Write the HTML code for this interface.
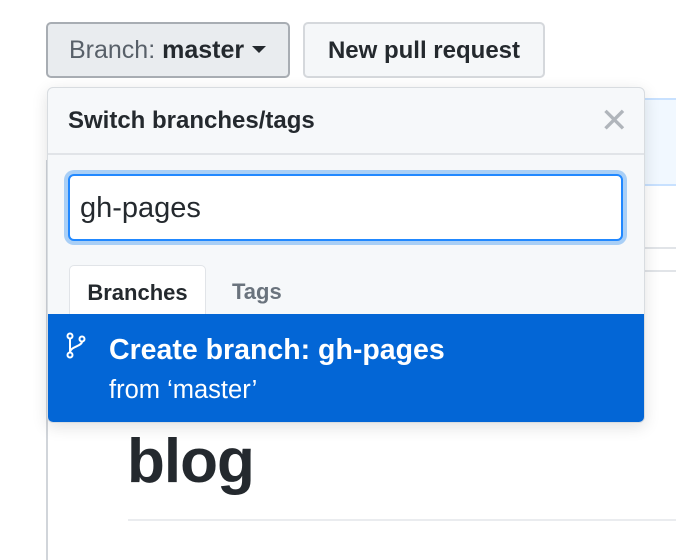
<!DOCTYPE html>
<html><head><style>
body{margin:0;width:676px;height:558px;background:#fff;position:relative;overflow:hidden;font-family:"Liberation Sans",sans-serif;color:#24292e}
.a{position:absolute}
</style></head><body>
<div class="a" style="left:645px;top:98px;width:40px;height:84px;background:#f1f8ff;border-top:2px solid #c8e1ff;border-bottom:2px solid #c8e1ff"></div>
<div class="a" style="left:645px;top:247px;width:40px;height:2px;background:#e1e4e8"></div>
<div class="a" style="left:645px;top:270px;width:40px;height:2px;background:#e1e4e8"></div>
<div class="a" style="left:46px;top:160px;width:2px;height:400px;background:#d1d5da"></div>
<div class="a" style="left:127px;top:426px;font-size:62px;font-weight:bold;letter-spacing:-1px">blog</div>
<div class="a" style="left:128px;top:519px;width:560px;height:2px;background:#eaecef"></div>

<div class="a" style="left:46px;top:22px;width:240px;height:52px;background:#e9ecef;border:2px solid #a8adb3;border-radius:5px;font-size:25px;line-height:52px;text-indent:21px;color:#586069;white-space:nowrap">Branch: <b style="color:#24292e">master</b><span style="display:inline-block;width:0;height:0;border-left:7px solid transparent;border-right:7px solid transparent;border-top:7px solid #24292e;margin-left:8px;vertical-align:5px"></span></div>
<div class="a" style="left:303px;top:22px;width:238px;height:52px;background:#f5f7f9;border:2px solid #d5d8dc;border-radius:5px;font-size:24px;font-weight:bold;line-height:54px;text-align:center">New pull request</div>

<div class="a" style="left:47px;top:87px;width:596px;height:334px;border:1px solid #d8dce0;border-radius:6px;background:#f6f8fa;box-shadow:0 4px 16px rgba(0,0,0,.12);overflow:hidden">
 <div class="a" style="left:0;top:0;width:596px;height:65px;border-bottom:2px solid #e1e4e8;font-size:24px;font-weight:bold;line-height:66px;text-indent:20px;white-space:nowrap">Switch branches/tags</div>
 <div class="a" style="left:552px;top:16px;font-size:34px;color:#b0b5bb;line-height:34px">&#x2715;</div>
 <div class="a" style="left:20px;top:86px;width:551px;height:63px;background:#fff;border:2px solid #2188ff;border-radius:6px;box-shadow:0 0 0 4px #a9cff6;font-size:29px;line-height:64px;text-indent:10px">gh-pages</div>
 <div class="a" style="left:21px;top:177px;width:135px;height:50px;background:#fff;border:1px solid #e1e4e8;border-bottom:none;border-radius:5px 5px 0 0;font-size:22px;font-weight:bold;line-height:54px;text-align:center">Branches</div>
 <div class="a" style="left:184px;top:177px;font-size:22px;font-weight:bold;line-height:54px;color:#6a737d">Tags</div>
 <div class="a" style="left:0;top:226px;width:596px;height:108px;background:#0366d6;color:#fff">
  <svg class="a" style="left:18px;top:18px" width="22" height="28" viewBox="0 0 22 28"><g fill="none" stroke="#fff" stroke-width="2"><circle cx="4" cy="4" r="2.5"/><circle cx="4" cy="23" r="2.5"/><circle cx="16" cy="7" r="2.5"/><path d="M4 6.5V20.5M16 9.5c0 5-12 5-12 11"/></g></svg>
  <div class="a" style="left:61px;top:20px;font-size:28.5px;font-weight:bold;white-space:nowrap">Create branch: gh-pages</div>
  <div class="a" style="left:61px;top:62px;font-size:25.5px;white-space:nowrap">from ‘master’</div>
 </div>
</div>
</body></html>
